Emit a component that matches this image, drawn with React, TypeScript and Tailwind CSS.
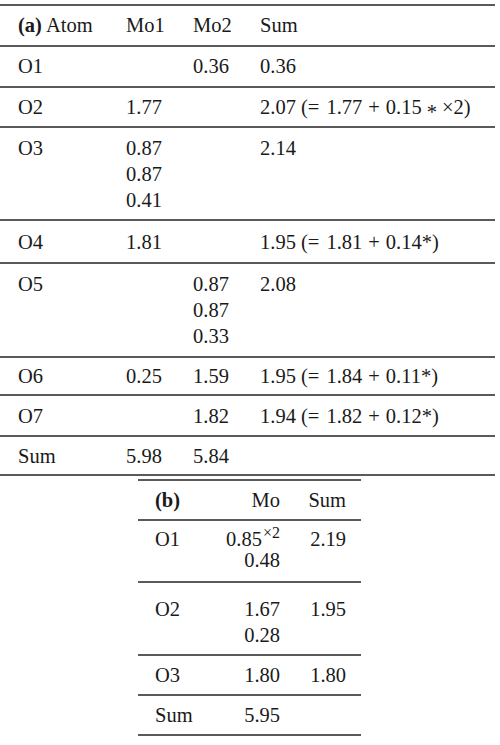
import React from "react";

function Rule() {
  return <div className="h-[2px] bg-[#5a5a5a]" />;
}

function Cell({ lines, className = "" }: { lines: React.ReactNode[]; className?: string }) {
  return (
    <div className={className}>
      {lines.map((l, i) => (
        <div key={i}>{l}</div>
      ))}
    </div>
  );
}

function ARow({ a, b, c, d, pad = "py-[6.4px]" }: { a: React.ReactNode; b?: React.ReactNode[]; c?: React.ReactNode[]; d?: React.ReactNode[]; pad?: string }) {
  return (
    <>
      <div className={`flex ${pad}`}>
        <div className="w-[126px] pl-[18px]">{a}</div>
        <Cell className="w-[67px]" lines={b || []} />
        <Cell className="w-[67px]" lines={c || []} />
        <Cell className="flex-1" lines={d || []} />
      </div>
      <Rule />
    </>
  );
}

// sum expression like 1.95 (= 1.81 + 0.14*)
function Expr({ total, x, y, star }: { total: string; x: string; y: string; star?: boolean }) {
  return (
    <span className="whitespace-nowrap">
      {total} (=<span className="ml-[7px]">{x}</span>
      <span className="mx-[6px]">+</span>
      {y}
      {star ? (
        <>
          <span className="relative top-[5px] mx-[5px]">*</span>×2)
        </>
      ) : (
        "*)"
      )}
    </span>
  );
}

function BRow({ a, b, c, className = "", lh = "leading-[26px]" }: { a: React.ReactNode; b: React.ReactNode[]; c?: React.ReactNode; className?: string; lh?: string }) {
  return (
    <>
      <div className={`flex ${lh} ${className}`}>
        <div className="w-[80px] pl-[17px]">{a}</div>
        <Cell className="w-[62px] text-right" lines={b} />
        <div className="w-[66px] text-right">{c}</div>
      </div>
      <Rule />
    </>
  );
}

export default function App() {
  return (
    <div className="w-[500px] h-[745px] bg-white overflow-hidden font-['Liberation_Serif',serif] text-[20.5px] leading-[26px] text-[#1a1a1a]">
      {/* table (a) */}
      <div className="w-[495px] mt-[4px]">
        <Rule />
        <ARow a={<span><b>(a)</b> Atom</span>} b={["Mo1"]} c={["Mo2"]} d={["Sum"]} />
        <ARow a="O1" c={["0.36"]} d={["0.36"]} />
        <ARow a="O2" b={["1.77"]} d={[<Expr total="2.07" x="1.77" y="0.15" star />]} />
        <ARow a="O3" b={["0.87", "0.87", "0.41"]} d={["2.14"]} />
        <ARow a="O4" b={["1.81"]} d={[<Expr total="1.95" x="1.81" y="0.14" />]} pad="pt-[7.4px] pb-[7.4px]" />
        <ARow a="O5" c={["0.87", "0.87", "0.33"]} d={["2.08"]} pad="pt-[7px] pb-[7px]" />
        <ARow a="O6" b={["0.25"]} c={["1.59"]} d={[<Expr total="1.95" x="1.84" y="0.11" />]} pad="pt-[5.5px] pb-[5px]" />
        <ARow a="O7" c={["1.82"]} d={[<Expr total="1.94" x="1.82" y="0.12" />]} />
        <ARow a="Sum" b={["5.98"]} c={["5.84"]} pad="pt-[6px] pb-[5px]" />
      </div>

      {/* table (b) */}
      <div className="w-[223px] ml-[138px] mt-[3px]">
        <Rule />
        <BRow className="py-[6px]" a={<b>(b)</b>} b={["Mo"]} c="Sum" />
        <BRow
          className="pt-[8px] pb-[10px]"
          lh="leading-[21px]"
          a="O1"
          b={[
            <span>
              0.85<sup className="text-[16px] -top-[8px] ml-[1px]">×2</sup>
            </span>,
            "0.48",
          ]}
          c="2.19"
        />
        <BRow className="pt-[13px] pb-[6px]" a="O2" b={["1.67", "0.28"]} c="1.95" />
        <BRow className="py-[6px]" a="O3" b={["1.80"]} c="1.80" />
        <BRow className="py-[6px]" a="Sum" b={["5.95"]} />
      </div>
    </div>
  );
}
